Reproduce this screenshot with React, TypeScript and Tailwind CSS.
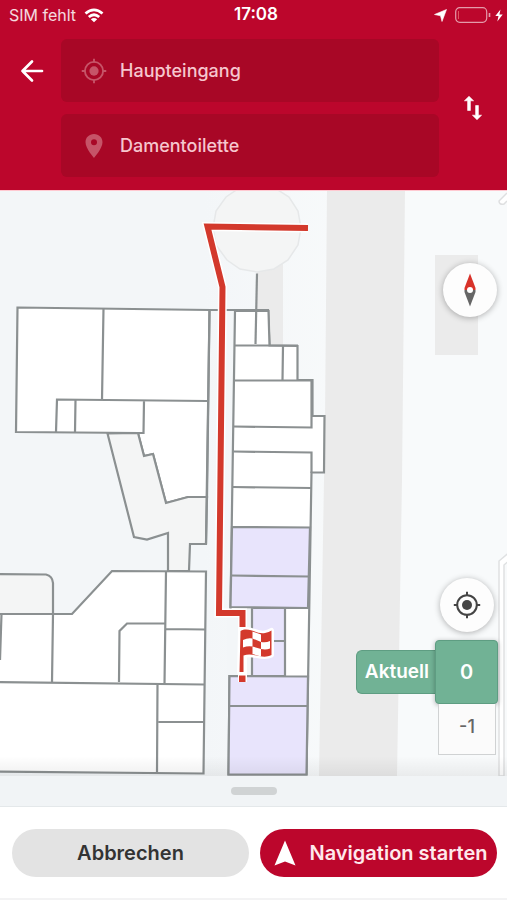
import { useState } from "react";

const WALL = "#8b9091";

const GOAL_FLAG =
  "M240.500 631 C249 626 257 635 265 633 Q269 632 271.500 630.500 L271.500 655 C262 660 254 652 243.500 655.500 L243.500 672 L239.500 672 Z";

function LocateIcon({ className }: { className: string }) {
  return (
    <svg viewBox="0 0 28 28" className={className} fill="none" stroke="currentColor" strokeWidth="2" aria-hidden="true">
      <circle cx="14" cy="14" r="9.800" />
      <circle cx="14" cy="14" r="5" fill="currentColor" stroke="none" />
      <path d="M14 0.800v4M14 23.200v4M0.800 14h4M23.200 14h4" />
    </svg>
  );
}

function StatusBar() {
  return (
    <div className="grid h-[30px] grid-cols-3 items-center pr-1 pl-[9px] text-white">
      <div className="flex items-center gap-2 text-base whitespace-nowrap text-white/85">
        <span>SIM fehlt</span>
        <svg viewBox="0 0 20 15" className="h-[15px] w-5" fill="none" stroke="#fff" strokeWidth="2.800" aria-hidden="true">
          <path d="M1.500 5.500Q10 -1.800 18.500 5.500" />
          <path d="M4.800 9Q10 4.600 15.200 9" />
          <path d="M10 14.300L6.800 11.200Q10 8.600 13.200 11.200Z" fill="#fff" stroke="none" />
        </svg>
      </div>
      <time className="text-center text-[17px] font-semibold">17:08</time>
      <div className="flex items-center justify-end gap-1">
        <svg viewBox="0 0 13 13" className="mr-1 h-[13px] w-[13px]" fill="#fff" aria-hidden="true">
          <path d="M12.500 0.500L8 12.500L6.500 6.800L0.500 5.500Z" stroke="#fff" strokeWidth="0.600" strokeLinejoin="round" />
        </svg>
        <svg viewBox="0 0 36 16" className="h-4 w-9" fill="none" stroke="#fff" strokeOpacity="0.600" aria-hidden="true">
          <rect x="0.700" y="0.700" width="31" height="14.600" rx="4" strokeWidth="1.200" />
          <path d="M3.500 4v8" stroke="#e05560" strokeOpacity="1" />
          <path d="M34.500 6v4" strokeWidth="1.600" />
        </svg>
        <svg viewBox="0 0 8 13" className="h-[13px] w-2" fill="#fff" aria-hidden="true">
          <path d="M5.500 0.500L0.300 7H3.500L2.300 12.500L7.700 5.500H4.400Z" />
        </svg>
      </div>
    </div>
  );
}

function RouteHeader() {
  const [from, setFrom] = useState("Haupteingang");
  const [to, setTo] = useState("Damentoilette");
  const field = "flex h-[63px] items-center gap-[13px] rounded-md bg-[#a80726] pl-5";
  const input = "h-8 min-w-0 flex-1 bg-transparent text-lg font-medium text-[#f6c6ce] outline-none";
  return (
    <header className="border-b border-[#ffc9d1] bg-[#bc062c]">
      <StatusBar />
      <div className="flex pt-[9px] pb-[13px]">
        <div className="flex w-[61px] shrink-0 flex-col">
          <button type="button" aria-label="Zurück" className="flex h-[63px] items-center justify-center pl-[3px] text-white">
            <svg viewBox="0 0 24 24" className="h-6 w-6" fill="none" stroke="currentColor" strokeWidth="2.700" strokeLinecap="round" strokeLinejoin="round" aria-hidden="true">
              <path d="M22 12H2.500M12 2.500L2.500 12L12 21.500" />
            </svg>
          </button>
        </div>
        <div className="flex min-w-0 flex-1 flex-col gap-3">
          <div className={field}>
            <LocateIcon className="h-[26px] w-[26px] shrink-0 text-[#c65468]" />
            <input aria-label="Start" className={input} value={from} onChange={(e) => setFrom(e.target.value)} />
          </div>
          <div className={field}>
            <svg viewBox="0 0 26 26" className="h-[26px] w-[26px] shrink-0 text-[#c65468]" fill="currentColor" aria-hidden="true">
              <path fillRule="evenodd" d="M13 1C8 1 4.500 4.600 4.500 9.300C4.500 15.500 13 25 13 25S21.500 15.500 21.500 9.300C21.500 4.600 18 1 13 1ZM13 6.300a3 3 0 1 1 0 6a3 3 0 1 1 0-6Z" />
            </svg>
            <input aria-label="Ziel" className={input} value={to} onChange={(e) => setTo(e.target.value)} />
          </div>
        </div>
        <div className="flex w-[68px] shrink-0 items-center justify-center">
          <button
            type="button"
            aria-label="Start und Ziel tauschen"
            className="text-white"
            onClick={() => {
              setFrom(to);
              setTo(from);
            }}
          >
            <svg viewBox="0 0 20 26" className="h-[26px] w-5" fill="currentColor" stroke="currentColor" strokeWidth="0.600" strokeLinejoin="round" aria-hidden="true">
              <path d="M6 1.300L10.600 5.800H7.400V15.500H4.600V5.800H1.400Z" />
              <path d="M14 24.700L18.600 20.200H15.400V10.500H12.600V20.200H9.400Z" />
            </svg>
          </button>
        </div>
      </div>
    </header>
  );
}

function FloorPlan() {
  return (
    <svg
      viewBox="0 191 507 585"
      preserveAspectRatio="xMidYMid slice"
      className="absolute inset-0 h-full w-full"
      role="img"
      aria-label="Gebäudeplan mit Route"
    >
      <defs>
        <linearGradient id="ground" x1="0" x2="1">
          <stop offset="0.400" stopColor="#f3f6f8" />
          <stop offset="0.700" stopColor="#f8fafb" />
        </linearGradient>
        <linearGradient id="fade" x1="0" x2="0" y1="0" y2="1">
          <stop offset="0" stopColor="#000" stopOpacity="0" />
          <stop offset="1" stopColor="#000" stopOpacity="0.060" />
        </linearGradient>
      </defs>
      <rect y="190" width="507" height="586" fill="url(#ground)" />

      {/* paths and forecourt */}
      <path d="M327 190H405L402 480L397 776H319L325 420Z" fill="#ebebeb" />
      <path d="M435 255H478V355H435Z" fill="#ebebeb" />
      <path d="M257 260H283V345H257Z" fill="#ebebeb" />
      <path
        d="M257 184L274 187.500L289 197L298 211L301 228L298 245L288 260L274 269L257 272L240 269L227 260L216 245L213 228L216 211L226 197L240 187.500Z"
        fill="#f4f5f5"
        stroke="#e6e8e9"
        strokeWidth="1.500"
      />

      {/* rooms */}
      <g stroke={WALL} strokeWidth="2.200" fill="#fff">
        <path d="M17.500 307.500L209.500 310L207 497H188L166 503L153 454L144 456L138 433L16 432Z" />
        <path d="M107.500 433.500L134 537L147 539.500L168 533L168 571L189 571L190 544H206L207 497H188L166 503L153 454L144 456L138 433Z" fill="#f4f5f5" />
        <path d="M103.500 308.500L102 400M207 401L57 399.500L56 432M75.500 400L75 432M144 401L143.500 433H107" fill="none" />
        <path d="M209.500 310L206 544M209 310H268L269.500 345" fill="none" />
        <path d="M235 311H268.500L269.500 345.500L297.500 346V380H312.500V416H324.500L324 472.500H311.500L306.500 774.500H228.500L229.500 676H233L230.500 607Z" />
      </g>
      <path d="M227 609H251V675H227Z" fill="#f3f6f8" />
      <g stroke={WALL} strokeWidth="2.200" fill="none">
        <path d="M232 527L310 527.500L308 608L230.500 607Z M252 608H285V676H252Z M229.500 676L308 676.500L306.500 774.500H228.500Z" fill="#e8e4fc" />
        <path d="M257 273.500L255.500 344" />
        <path d="M234.500 345.500H298M283 346L282.500 380M233.500 380.500H313M233.500 426.500L311.500 427.500V381M233.500 451.500L311.500 452.500V473M232.500 487L311 488M231 575.500L309 576.500M285 641H274M229 706H307" />
      </g>

      <g stroke={WALL} strokeWidth="2.200" fill="#fff">
        <path d="M-3 574L46 574.500Q52.500 576 53 583V614H-3Z" fill="#f4f5f5" />
        <path d="M-3 614H72L112 571L206 571.500L203.500 773.500L-3 771.500Z" />
        <path d="M166 571.500L164.500 684M53 614L52 682M1.500 614L0 660M119 682L119.500 631L127 623.500H165M166 629L205 629.500M-3 682L204 684.500M157.500 684L157 772.500M158.500 722H204" fill="none" />
      </g>

      {/* neighbouring outlines */}
      <path d="M507 193L499 201Q499 205 504 204L507 201" fill="#fff" stroke="#dedfe0" strokeWidth="1.500" />
      <path d="M512 550L499 561V776H504V565L512 558Z" fill="#fff" stroke="#dfe1e2" strokeWidth="1.500" />
      <rect y="756" width="507" height="20" fill="url(#fade)" />

      {/* route */}
      <g fill="none">
        <path d="M308 228L207.500 226.500L222.500 287L219 613H242.500V682" stroke="#fff" strokeWidth="9" />
        <path d="M308 228L207.500 226.500L222.500 287L219 613H242.500V627" stroke="#d3392c" strokeWidth="6" />
      </g>
      <path d={GOAL_FLAG} fill="#fff" stroke="#fff" strokeWidth="5" strokeLinejoin="round" />
      <path d={GOAL_FLAG} fill="#d3392c" />
      <g fill="#fff">
        <path d="M243 640Q248 637.500 252.500 638.500V646.500Q248 645.500 243 647.500Z" />
        <path d="M252.500 631.500L261 634.500V642L252.500 638.500Z" />
        <path d="M261 642Q266 643 270 641V648.500Q266 650 261 649Z" />
        <path d="M252.500 646.500L261 649V656.500L252.500 654Z" />
      </g>
      <path d="M239 675.500H245.500V682H239Z" fill="#d3392c" />
    </svg>
  );
}

function MapControls() {
  const [floor, setFloor] = useState("0");
  const round =
    "flex h-[54px] w-[54px] items-center justify-center rounded-full bg-[#fdfdfd] shadow-[0_1px_6px_rgba(0,0,0,0.3)]";
  return (
    <>
      <button type="button" aria-label="Nach Norden ausrichten" className={`${round} absolute top-[72px] right-[10px]`}>
        <svg viewBox="0 0 12 34" className="h-[34px] w-3" aria-hidden="true">
          <path d="M6 0.500L11.500 15V17H0.500V15Z" fill="#d8322a" />
          <path d="M6 33.500L11.500 19V17H0.500V19Z" fill="#666" />
          <circle cx="6" cy="17" r="3" fill="#fff" />
        </svg>
      </button>
      <div className="absolute right-[9px] bottom-[21px] flex flex-col items-end">
        <button type="button" aria-label="Meinen Standort anzeigen" className={`${round} mr-1 mb-2 text-[#444]`}>
          <LocateIcon className="h-7 w-7" />
        </button>
        <div className="flex items-center">
          <span className="flex h-11 items-center rounded-l-md border border-r-0 border-[#5e9d82] bg-[#71b295] pr-[6px] pl-2 text-[19px] font-semibold text-white">
            Aktuell
          </span>
          <button
            type="button"
            aria-pressed={floor === "0"}
            onClick={() => setFloor("0")}
            className="h-16 w-[63px] rounded-sm border border-[#5e9d82] bg-[#71b295] text-xl font-semibold text-white shadow-[0_1px_5px_rgba(0,0,0,0.3)]"
          >
            0
          </button>
        </div>
        <button
          type="button"
          aria-pressed={floor === "-1"}
          onClick={() => setFloor("-1")}
          className="mr-[2px] h-[51px] w-[58px] border border-t-0 border-[#d0d2d3] bg-[#fbfbfb] pb-1 text-lg font-medium text-[#666]"
        >
          -1
        </button>
      </div>
    </>
  );
}

export default function App() {
  return (
    <div className="flex min-h-screen flex-col bg-white font-['Inter','Liberation_Sans',sans-serif]">
      <RouteHeader />
      <main className="relative min-h-[420px] flex-1 overflow-hidden">
        <FloorPlan />
        <MapControls />
      </main>
      <footer className="border-b-2 border-[#f3f3f4]">
        <div className="flex h-[31px] items-center justify-center border-b border-[#e4e8ea] bg-[#f1f4f6]">
          <span className="h-2 w-[46px] rounded-full bg-[#d0d3d4]" />
        </div>
        <div className="grid grid-cols-2 gap-[11px] pt-[22px] pr-[10px] pb-[21px] pl-3 text-xl font-semibold">
          <button type="button" className="h-12 rounded-full bg-[#e3e3e3] text-[#333]">
            Abbrechen
          </button>
          <button type="button" className="flex h-12 items-center justify-center gap-[14px] rounded-full bg-[#bc062c] pl-1 whitespace-nowrap text-[#ffe9ec]">
            <svg viewBox="0 0 22 26" className="h-[26px] w-[22px] shrink-0" fill="#fff" aria-hidden="true">
              <path d="M11 0.500L21.500 25.500L11 21.500L0.500 25.500Z" />
            </svg>
            Navigation starten
          </button>
        </div>
      </footer>
    </div>
  );
}
